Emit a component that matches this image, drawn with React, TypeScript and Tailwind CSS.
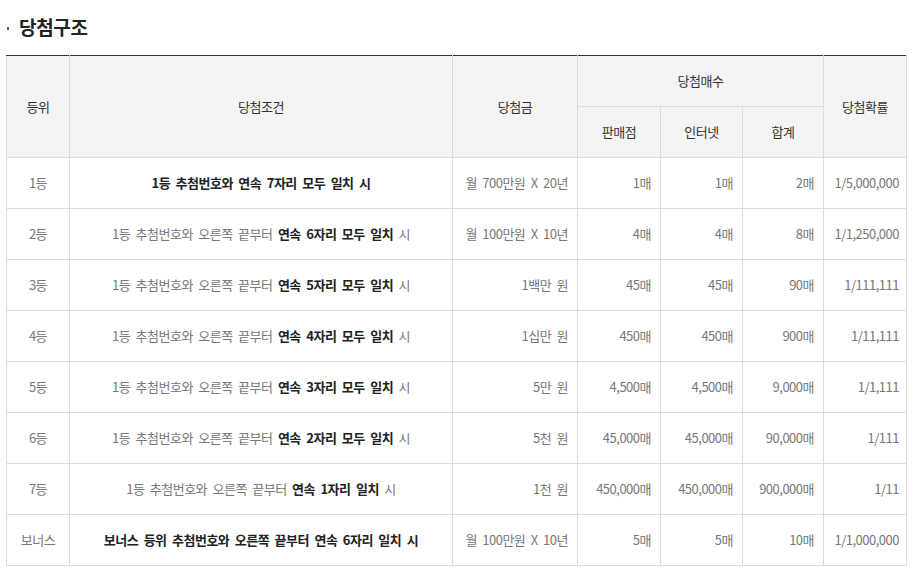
import React from "react";

type Row = {
  rank: string;
  cond: React.ReactNode;
  prize: string;
  store: string;
  net: string;
  total: string;
  prob: string;
};

const B = ({ children }: { children: React.ReactNode }) => (
  <b className="font-bold text-[#222]">{children}</b>
);

const pre = "1등 추첨번호와 오른쪽 끝부터 ";

const rows: Row[] = [
  { rank: "1등", cond: <B>1등 추첨번호와 연속 7자리 모두 일치 시</B>, prize: "월 700만원 X 20년", store: "1매", net: "1매", total: "2매", prob: "1/5,000,000" },
  { rank: "2등", cond: <>{pre}<B>연속 6자리 모두 일치</B> 시</>, prize: "월 100만원 X 10년", store: "4매", net: "4매", total: "8매", prob: "1/1,250,000" },
  { rank: "3등", cond: <>{pre}<B>연속 5자리 모두 일치</B> 시</>, prize: "1백만 원", store: "45매", net: "45매", total: "90매", prob: "1/111,111" },
  { rank: "4등", cond: <>{pre}<B>연속 4자리 모두 일치</B> 시</>, prize: "1십만 원", store: "450매", net: "450매", total: "900매", prob: "1/11,111" },
  { rank: "5등", cond: <>{pre}<B>연속 3자리 모두 일치</B> 시</>, prize: "5만 원", store: "4,500매", net: "4,500매", total: "9,000매", prob: "1/1,111" },
  { rank: "6등", cond: <>{pre}<B>연속 2자리 모두 일치</B> 시</>, prize: "5천 원", store: "45,000매", net: "45,000매", total: "90,000매", prob: "1/111" },
  { rank: "7등", cond: <>{pre}<B>연속 1자리 일치</B> 시</>, prize: "1천 원", store: "450,000매", net: "450,000매", total: "900,000매", prob: "1/11" },
  { rank: "보너스", cond: <B>보너스 등위 추첨번호와 오른쪽 끝부터 연속 6자리 일치 시</B>, prize: "월 100만원 X 10년", store: "5매", net: "5매", total: "10매", prob: "1/1,000,000" },
];

export default function App() {
  return (
    <div
      className="bg-white w-[923px] h-[584px] px-[6px] text-[#777]"
      style={{ fontFamily: '"Noto Sans CJK KR", "Noto Sans", sans-serif' }}
    >
      <div className="h-[55px] flex items-center">
        <span className="w-[2px] h-[3px] bg-[#555] ml-[1px] mt-[1px]" />
        <h2 className="ml-[10px] text-[19px] font-semibold text-[#222] tracking-[-0.3px]">당첨구조</h2>
      </div>
      <table className="w-[900px] table-fixed border-collapse border-t border-t-[#333] text-[13px] tracking-[-0.5px] [word-spacing:3px]">
        <colgroup>
          <col className="w-[63px]" />
          <col className="w-[383px]" />
          <col className="w-[125px]" />
          <col className="w-[83px]" />
          <col className="w-[82px]" />
          <col className="w-[81px]" />
          <col className="w-[83px]" />
        </colgroup>
        <thead className="bg-[#f4f4f4] text-[#333]">
          <tr className="h-[51px]">
            <th rowSpan={2} className="font-normal border border-[#dcdcdc] border-t-[#333]">등위</th>
            <th rowSpan={2} className="font-normal border border-[#dcdcdc] border-t-[#333]">당첨조건</th>
            <th rowSpan={2} className="font-normal border border-[#dcdcdc] border-t-[#333]">당첨금</th>
            <th colSpan={3} className="font-normal border border-[#dcdcdc] border-t-[#333]">당첨매수</th>
            <th rowSpan={2} className="font-normal border border-[#dcdcdc] border-t-[#333]">당첨확률</th>
          </tr>
          <tr className="h-[51px]">
            <th className="font-normal border border-[#dcdcdc]">판매점</th>
            <th className="font-normal border border-[#dcdcdc]">인터넷</th>
            <th className="font-normal border border-[#dcdcdc]">합계</th>
          </tr>
        </thead>
        <tbody>
          {rows.map((r) => (
            <tr key={r.rank} className="h-[51px]">
              <td className="border border-[#dcdcdc] text-center">{r.rank}</td>
              <td className="border border-[#dcdcdc] text-center">{r.cond}</td>
              <td className="border border-[#dcdcdc] text-right pr-[9px]">{r.prize}</td>
              <td className="border border-[#dcdcdc] text-right pr-[9px]">{r.store}</td>
              <td className="border border-[#dcdcdc] text-right pr-[9px]">{r.net}</td>
              <td className="border border-[#dcdcdc] text-right pr-[9px]">{r.total}</td>
              <td className="border border-[#dcdcdc] text-right pr-[7px]">{r.prob}</td>
            </tr>
          ))}
        </tbody>
      </table>
    </div>
  );
}
